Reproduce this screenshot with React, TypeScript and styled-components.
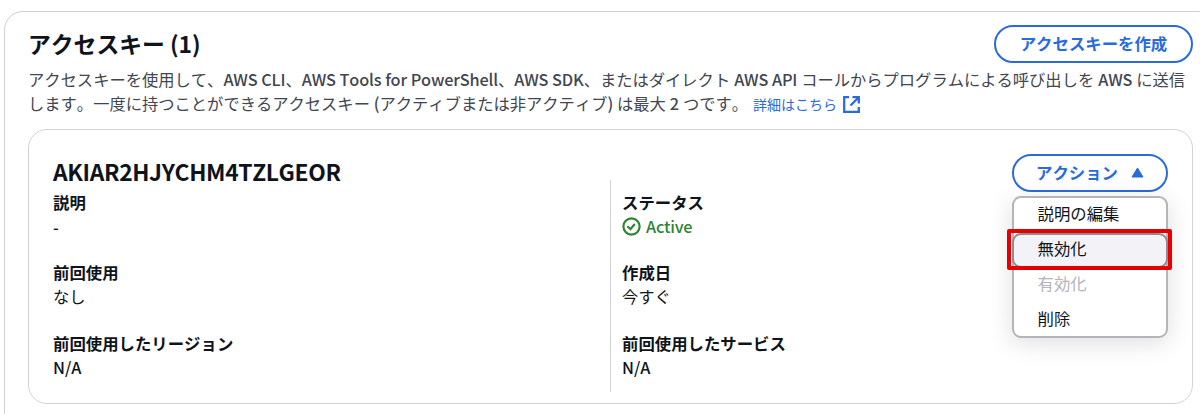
import React from "react";
import styled, { createGlobalStyle, css } from "styled-components";

const GlobalStyle = createGlobalStyle`
  * { box-sizing: border-box; }
  html, body { margin: 0; background: #fff; }
  body {
    width: 1200px;
    height: 414px;
    overflow: hidden;
    color: #0f141a;
    font-family: "Noto Sans CJK JP", "Noto Sans", sans-serif;
    font-size: 16.3px;
    line-height: 24px;
    font-kerning: none;
  }
`;

const Viewport = styled.main`
  width: 1200px;
  height: 414px;
  padding: 11px 0 0 4px;
  overflow: hidden;
`;

const Panel = styled.section`
  width: 1212px;
  height: 440px;
  padding: 13px 23px 0 23px;
  border: 1.5px solid #cfd0d6;
  border-radius: 19px;
`;

const PanelHeader = styled.header`
  display: flex;
  align-items: center;
  justify-content: space-between;
  width: 1165px;
  height: 38px;
`;

const Title = styled.h2`
  margin: 0;
  font-size: 22.8px;
  line-height: 30px;
  font-weight: 700;
`;

const Latin = styled.span`
  line-height: 1;
  font-weight: 500;
  letter-spacing: -0.17px;
`;

const PillButton = styled.button<{ $width: number }>`
  display: flex;
  align-items: center;
  justify-content: center;
  gap: 13px;
  flex: none;
  width: ${(p) => p.$width}px;
  height: 38px;
  padding: 0 0 2px;
  border: 2px solid #2a6bdc;
  border-radius: 19px;
  background: #fff;
  color: #2a6bdc;
  font: inherit;
  font-size: 16.4px;
  font-weight: 700;
`;

const Description = styled.p`
  margin: 4px 0 0;
  color: #424650;
  line-height: 24px;
  word-spacing: 0.3px;
  white-space: nowrap;
`;

const Link = styled.a`
  margin-left: 5px;
  color: #2a6bdc;
  font-size: 14px;
  line-height: 1;
  text-decoration: none;
`;

const ExternalIcon = styled.svg`
  width: 17px;
  height: 17px;
  margin-left: 5.5px;
  vertical-align: -3px;
`;

const KeyCard = styled.article`
  display: flex;
  width: 1165px;
  height: 275px;
  margin-top: 14px;
  padding: 23px 23px 0 24px;
  border: 1.5px solid #d3d4d8;
  border-radius: 19px;
`;

const Column = styled.div<{ $divided?: boolean }>`
  width: 557px;
  ${(p) =>
    p.$divided &&
    css`
      width: 402px;
      height: 212px;
      margin-top: 27px;
      padding: 10px 0 0 11px;
      border-left: 1.5px solid #cfd0d8;
    `}
`;

const KeyName = styled.h3`
  margin: 5px 0 4px;
  height: 28px;
  line-height: 28px;
  font-size: 22.8px;
  letter-spacing: -0.36px;
  font-weight: 700;
`;

const Field = styled.dl`
  margin: 0 0 22.3px;
`;

const Label = styled.dt`
  height: 24px;
  font-size: 16.4px;
  font-weight: 700;
`;

const Value = styled.dd`
  display: flex;
  align-items: center;
  height: 24px;
  margin: 0;
`;

const LatinValue = styled(Value)`
  padding-top: 1px;
  font-weight: 500;
`;

const Status = styled.span`
  display: flex;
  align-items: center;
  gap: 5px;
  color: #2f8434;
  font-weight: 500;
  letter-spacing: -0.25px;
`;

const Actions = styled.div`
  position: relative;
  width: 156px;
  margin-top: 1px;
`;

const Menu = styled.ul`
  position: absolute;
  top: 42px;
  left: 0;
  width: 156px;
  height: 142px;
  margin: 0;
  padding: 0;
  list-style: none;
  border: 2px solid #b4b4bb;
  border-radius: 9px;
  background: #fff;
  box-shadow: 0 5px 23px 1px rgba(0, 7, 22, 0.12);
`;

const MenuItem = styled.li<{ $disabled?: boolean; $active?: boolean }>`
  display: flex;
  align-items: center;
  height: 35px;
  padding: 0 0 5px 23.5px;
  color: ${(p) => (p.$disabled ? "#b4b4bb" : "#0f141a")};
  font-size: 16.4px;
  ${(p) =>
    p.$active &&
    css`
      margin: 0 -2px;
      border: 2px solid #8c8c94;
      border-radius: 9px;
      background: #f3f3f7;
    `}
`;

const Highlight = styled.div`
  position: absolute;
  top: 75px;
  left: -5px;
  width: 165px;
  height: 41px;
  border: 4px solid #e60000;
  border-radius: 2px;
`;

const menuItems = [
  { label: "説明の編集" },
  { label: "無効化", active: true },
  { label: "有効化", disabled: true },
  { label: "削除" },
];

export default function App() {
  return (
    <Viewport>
      <GlobalStyle />
      <Panel>
        <PanelHeader>
          <Title>アクセスキー (1)</Title>
          <PillButton $width={199}>アクセスキーを作成</PillButton>
        </PanelHeader>
        <Description>
          アクセスキーを使用して、<Latin>AWS CLI</Latin>、<Latin>AWS Tools for PowerShell</Latin>、
          <Latin>AWS SDK</Latin>、またはダイレクト <Latin>AWS API</Latin> コールからプログラムによる呼び出しを{" "}
          <Latin>AWS</Latin> に送信
          <br />
          します。一度に持つことができるアクセスキー <Latin>(</Latin>アクティブまたは非アクティブ<Latin>)</Latin> は最大{" "}
          <Latin>2</Latin> つです。
          <Link>
            詳細はこちら
            <ExternalIcon viewBox="0 0 17 17" fill="none" stroke="#2a6bdc" strokeWidth="2.3">
              <path d="M6 1.2H1.2v14.6h14.6V11M9.5 1.2h6.3v6.3M15.5 1.5L7.5 9.5" />
            </ExternalIcon>
          </Link>
        </Description>
        <KeyCard>
          <Column>
            <KeyName>AKIAR2HJYCHM4TZLGEOR</KeyName>
            <Field>
              <Label>説明</Label>
              <LatinValue>-</LatinValue>
            </Field>
            <Field>
              <Label>前回使用</Label>
              <Value>なし</Value>
            </Field>
            <Field>
              <Label>前回使用したリージョン</Label>
              <LatinValue>N/A</LatinValue>
            </Field>
          </Column>
          <Column $divided>
            <Field>
              <Label>ステータス</Label>
              <Value>
                <Status>
                  <svg width="19" height="19" viewBox="0 0 19 19" fill="none" stroke="#2f8434" strokeWidth="2.2">
                    <circle cx="9.5" cy="9.5" r="8.1" />
                    <path d="M5.4 9.2l3 3 4.4-5.2" />
                  </svg>
                  Active
                </Status>
              </Value>
            </Field>
            <Field>
              <Label>作成日</Label>
              <Value>今すぐ</Value>
            </Field>
            <Field>
              <Label>前回使用したサービス</Label>
              <LatinValue>N/A</LatinValue>
            </Field>
          </Column>
          <Actions>
            <PillButton $width={156}>
              アクション
              <svg width="13" height="11" viewBox="0 0 13 11">
                <path d="M6.5 1L12 10H1z" fill="#2a6bdc" stroke="#2a6bdc" strokeLinejoin="round" />
              </svg>
            </PillButton>
            <Menu>
              {menuItems.map((item) => (
                <MenuItem key={item.label} $active={item.active} $disabled={item.disabled}>
                  {item.label}
                </MenuItem>
              ))}
            </Menu>
            <Highlight />
          </Actions>
        </KeyCard>
      </Panel>
    </Viewport>
  );
}
